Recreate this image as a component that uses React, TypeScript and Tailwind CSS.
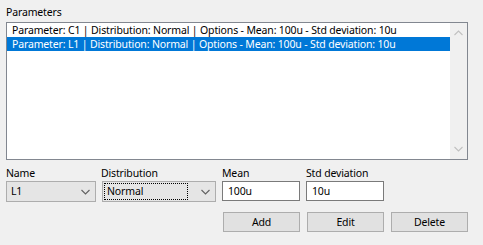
import React from 'react'

const rows = [
  'Parameter: C1 | Distribution: Normal | Options - Mean: 100u - Std deviation: 10u',
  'Parameter: L1 | Distribution: Normal | Options - Mean: 100u - Std deviation: 10u',
]

function Chevron({ up, color }: { up?: boolean; color: string }) {
  return (
    <svg width="9" height="6" viewBox="0 0 9 6" className="block">
      <path
        d={up ? 'M0.5 5 L4.5 1 L8.5 5' : 'M0.5 1 L4.5 5 L8.5 1'}
        fill="none"
        stroke={color}
        strokeWidth="1.1"
      />
    </svg>
  )
}

function Combo({ value, width, focused }: { value: string; width: string; focused?: boolean }) {
  return (
    <div className={`${width} h-[21px] flex items-center border border-[#adadad] bg-[#e5e5e5] pl-[2px] pr-[5px]`}>
      <div
        className={`flex-1 h-[15px] flex items-center ${
          focused ? 'outline outline-1 outline-dotted outline-[#000] mr-[14px]' : ''
        }`}
      >
        <span className="pl-[2px]">{value}</span>
      </div>
      <Chevron color="#606060" />
    </div>
  )
}

function Field({ value }: { value: string }) {
  return (
    <div className="w-[78px] h-[20px] flex items-center border border-[#7a7a7a] bg-white px-[5px]">
      {value}
    </div>
  )
}

function Btn({ label }: { label: string }) {
  return (
    <button className="w-[77px] h-[20px] flex items-center justify-center border border-[#adadad] bg-[#e1e1e1] text-black">
      {label}
    </button>
  )
}

export default function App() {
  return (
    <div
      className="w-[483px] h-[245px] overflow-hidden bg-[#f0f0f0] text-[10.5px] tracking-[-0.15px] leading-[15px] text-black pl-[6px] pt-[5px]"
      style={{ fontFamily: '"Noto Sans", "Open Sans", sans-serif' }}
    >
      {/* Parameters list */}
      <div className="h-[15px] mb-[2px]">Parameters</div>
      <div className="w-[462px] h-[138px] flex border border-[#828790] bg-white">
        <div className="flex-1 min-w-0 overflow-hidden">
          {rows.map((r, i) => (
            <div
              key={i}
              className={`h-[14px] leading-[14px] pl-[5px] whitespace-nowrap ${
                i === 1 ? 'bg-[#0078d7] text-white' : ''
              }`}
            >
              {r}
            </div>
          ))}
        </div>
        <div className="w-[17px] bg-[#f0f0f0] flex flex-col items-center justify-between py-[7px]">
          <Chevron up color="#c0c0c0" />
          <Chevron color="#c0c0c0" />
        </div>
      </div>

      {/* Inputs */}
      <div className="flex mt-[6px]">
        <div className="w-[90px]">
          <div className="h-[15px]">Name</div>
          <Combo value="L1" width="w-[90px]" />
        </div>
        <div className="ml-[5px]">
          <div className="h-[15px]">Distribution</div>
          <div className="ml-[1px]">
            <Combo value="Normal" width="w-[114px]" focused />
          </div>
        </div>
        <div className="ml-[6px]">
          <div className="h-[15px]">Mean</div>
          <Field value="100u" />
        </div>
        <div className="ml-[6px]">
          <div className="h-[15px]">Std deviation</div>
          <Field value="10u" />
        </div>
      </div>

      {/* Buttons */}
      <div className="flex gap-[7px] mt-[10px] ml-[217px]">
        <Btn label="Add" />
        <Btn label="Edit" />
        <Btn label="Delete" />
      </div>

      <div className="mt-[11px]">Output</div>
    </div>
  )
}
